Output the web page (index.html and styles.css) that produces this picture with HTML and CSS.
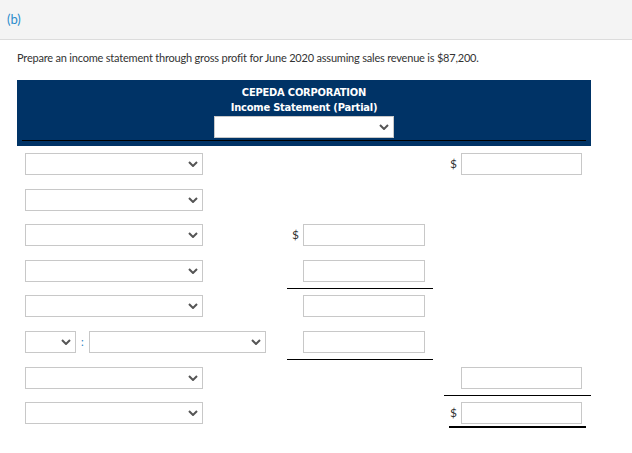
FILE: index.html
```html
<!DOCTYPE html>
<html>
<head>
<meta charset="utf-8">
<link rel="stylesheet" href="styles.css">
</head>
<body>
<div class="part-head"><span class="part-label">(b)</span></div>
<div class="content">
  <p class="prompt">Prepare an income statement through gross profit for June 2020 assuming sales revenue is $87,200.</p>
  <div class="band">
    <div class="band-title">CEPEDA CORPORATION</div>
    <div class="band-title">Income Statement (Partial)</div>
    <div class="dd dd-head"><svg width="10" height="6" viewBox="0 0 10 6"><path d="M1 1 L5 5 L9 1" fill="none" stroke="#555" stroke-width="2"/></svg></div>
    <div class="band-rule"></div>
  </div>
  <div class="rows">
    <!-- row 1 -->
    <div class="c1"><div class="dd dd-wide"><svg width="10" height="6" viewBox="0 0 10 6"><path d="M1 1 L5 5 L9 1" fill="none" stroke="#555" stroke-width="2"/></svg></div></div>
    <div class="c2"></div>
    <div class="c3"><div class="cell3"><span class="cur">$</span><span class="box"></span></div></div>
    <!-- row 2 -->
    <div class="c1"><div class="dd dd-wide"><svg width="10" height="6" viewBox="0 0 10 6"><path d="M1 1 L5 5 L9 1" fill="none" stroke="#555" stroke-width="2"/></svg></div></div>
    <div class="c2"></div>
    <div class="c3"></div>
    <!-- row 3 -->
    <div class="c1"><div class="dd dd-wide"><svg width="10" height="6" viewBox="0 0 10 6"><path d="M1 1 L5 5 L9 1" fill="none" stroke="#555" stroke-width="2"/></svg></div></div>
    <div class="c2"><div class="cell2"><span class="cur">$</span><span class="box"></span></div></div>
    <div class="c3"></div>
    <!-- row 4 -->
    <div class="c1"><div class="dd dd-wide"><svg width="10" height="6" viewBox="0 0 10 6"><path d="M1 1 L5 5 L9 1" fill="none" stroke="#555" stroke-width="2"/></svg></div></div>
    <div class="c2"><div class="cell2 ruled"><span class="cur"></span><span class="box"></span></div></div>
    <div class="c3"></div>
    <!-- row 5 -->
    <div class="c1"><div class="dd dd-wide"><svg width="10" height="6" viewBox="0 0 10 6"><path d="M1 1 L5 5 L9 1" fill="none" stroke="#555" stroke-width="2"/></svg></div></div>
    <div class="c2"><div class="cell2"><span class="cur"></span><span class="box"></span></div></div>
    <div class="c3"></div>
    <!-- row 6 -->
    <div class="c1 split">
      <div class="dd dd-small"><svg width="10" height="6" viewBox="0 0 10 6"><path d="M1 1 L5 5 L9 1" fill="none" stroke="#555" stroke-width="2"/></svg></div>
      <span class="colon">:</span>
      <div class="dd dd-mid"><svg width="10" height="6" viewBox="0 0 10 6"><path d="M1 1 L5 5 L9 1" fill="none" stroke="#555" stroke-width="2"/></svg></div>
    </div>
    <div class="c2"><div class="cell2 ruled"><span class="cur"></span><span class="box"></span></div></div>
    <div class="c3"></div>
    <!-- row 7 -->
    <div class="c1"><div class="dd dd-wide"><svg width="10" height="6" viewBox="0 0 10 6"><path d="M1 1 L5 5 L9 1" fill="none" stroke="#555" stroke-width="2"/></svg></div></div>
    <div class="c2"></div>
    <div class="c3"><div class="cell3 ruled"><span class="cur"></span><span class="box"></span></div></div>
    <!-- row 8 -->
    <div class="c1"><div class="dd dd-wide"><svg width="10" height="6" viewBox="0 0 10 6"><path d="M1 1 L5 5 L9 1" fill="none" stroke="#555" stroke-width="2"/></svg></div></div>
    <div class="c2"></div>
    <div class="c3"><div class="cell3 total"><span class="cur">$</span><span class="box"></span></div></div>
  </div>
</div>
</body>
</html>
```

FILE: styles.css
```css
* { box-sizing: border-box; }
html, body { margin: 0; padding: 0; background: #fff; }
body {
  font-family: Lato, "Open Sans", "Liberation Sans", sans-serif;
  color: #333;
  width: 632px;
  height: 453px;
  overflow: hidden;
}
.part-head {
  height: 40px;
  background: #f4f4f4;
  border-bottom: 1px solid #dcdcdc;
  padding-left: 7px;
  display: flex;
  align-items: center;
}
.part-label {
  color: #2a8ccc;
  font-size: 13px;
  line-height: 16px;
  margin-top: -2px;
}
.content { padding-left: 17px; }
.prompt {
  margin: 0;
  padding-top: 10px;
  font-size: 11px;
  line-height: 16px;
  height: 40px;
  letter-spacing: -0.2px;
}
.band {
  width: 574px;
  height: 66px;
  background: #003366;
  padding: 5px 5px 0 5px;
  display: flex;
  flex-direction: column;
  align-items: center;
}
.band-title {
  color: #fff;
  font-family: "DejaVu Sans Condensed", "DejaVu Sans", sans-serif;
  font-stretch: condensed;
  font-weight: bold;
  font-size: 11px;
  line-height: 15px;
  letter-spacing: -0.2px;
}
.band-rule {
  align-self: stretch;
  height: 1px;
  background: #000;
  margin-top: 2px;
}
.dd {
  height: 22px;
  background: #fff;
  border: 1px solid #c8c8c8;
  display: flex;
  align-items: center;
  justify-content: flex-end;
  padding-right: 4px;
}
.dd svg { display: block; }
.dd-head { width: 180px; margin-top: 1px; }
.dd-wide { width: 178px; }
.dd-small { width: 51px; }
.dd-mid { width: 177px; }
.rows {
  margin-top: 7px;
  padding-left: 8px;
  display: grid;
  grid-template-columns: 251px 146px 147px;
  column-gap: 11px;
  grid-auto-rows: 35.6px;
  align-items: start;
}
.split { display: flex; align-items: center; }
.colon {
  color: #2a7fc0;
  font-size: 11px;
  width: 13px;
  text-align: center;
}
.cur {
  width: 11px;
  font-size: 12px;
  line-height: 22px;
  color: #333;
}
.box {
  display: block;
  height: 22px;
  background: #fff;
  border: 1px solid #c8c8c8;
}
.cell2 { display: flex; padding-left: 5px; }
.cell2 .box { width: 122px; }
.cell3 { display: flex; padding-left: 6px; }
.cell3 .box { width: 121px; }
.ruled { padding-bottom: 6px; border-bottom: 1px solid #000; }
.total {
  margin-left: 5px;
  width: 137px;
  padding-left: 1px;
  padding-bottom: 2px;
  border-bottom: 2px solid #000;
}
```
